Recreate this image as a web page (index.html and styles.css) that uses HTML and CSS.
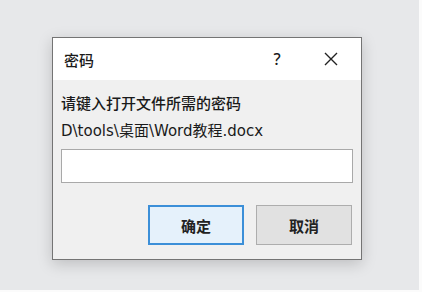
FILE: index.html
```html
<!DOCTYPE html>
<html>
<head>
    <meta charset="utf-8">
    <title>密码</title>
    <link rel="stylesheet" href="styles.css">
</head>
<body>
    <div class="desk">
        <div class="dialog">
            <div class="titlebar">
                <span class="title">密码</span>
                <span class="help">?</span>
                <span class="close">
                    <svg width="14" height="14" viewBox="0 0 14 14"><path d="M1 1L13 13M13 1L1 13" stroke="#222" stroke-width="1.4" fill="none"/></svg>
                </span>
            </div>
            <div class="content">
                <p class="prompt">请键入打开文件所需的密码</p>
                <p class="path">D\tools\桌面\Word教程.docx</p>
                <input class="password" type="password">
                <div class="buttons">
                    <button class="btn primary">确定</button>
                    <button class="btn">取消</button>
                </div>
            </div>
        </div>
    </div>
</body>
</html>
```

FILE: styles.css
```css
body {
    margin: 0;
    background: #fbfbfb;
    font-family: "Noto Sans", "Noto Sans CJK SC", sans-serif;
    color: #1a1a1a;
}
.desk {
    width: 419px;
    height: 290px;
    background: #e7e8ea;
    padding: 37px 0 0 52px;
    box-sizing: border-box;
}
.dialog {
    width: 310px;
    height: 223px;
    border: 1px solid #747474;
    box-sizing: border-box;
    background: #f0f0f0;
    box-shadow: 0 4px 14px rgba(0, 0, 0, .18);
    display: flex;
    flex-direction: column;
}
.titlebar {
    height: 42px;
    background: #fff;
    display: flex;
    align-items: center;
    padding-left: 11px;
    font-size: 15px;
    font-weight: 500;
}
.title {
    flex: 1;
}
.help {
    width: 20px;
    text-align: center;
    margin-right: 37px;
    font-size: 16px;
}
.close {
    display: flex;
    width: 14px;
    margin-right: 23px;
}
.content {
    padding: 9px 8px 0 8px;
    font-size: 15px;
    font-weight: 500;
}
.content p {
    margin: 0;
    line-height: 28px;
}
.path {
    font-family: "DejaVu Sans", "Noto Sans CJK SC", sans-serif;
    font-weight: normal;
}
.password {
    display: block;
    width: 292px;
    height: 34px;
    margin-top: 4px;
    border: 1px solid #a9a9a9;
    background: #fff;
    box-sizing: border-box;
}
.buttons {
    display: flex;
    justify-content: flex-end;
    gap: 12px;
    margin-top: 22px;
    padding-right: 1px;
}
.btn {
    width: 96px;
    height: 40px;
    font-family: "Noto Sans CJK SC", sans-serif;
    font-size: 15px;
    font-weight: 700;
    color: #222;
    background: #e1e1e1;
    border: 1px solid #adadad;
}
.primary {
    background: #e5f1fb;
    border: 2px solid #3c8fd8;
}
```
